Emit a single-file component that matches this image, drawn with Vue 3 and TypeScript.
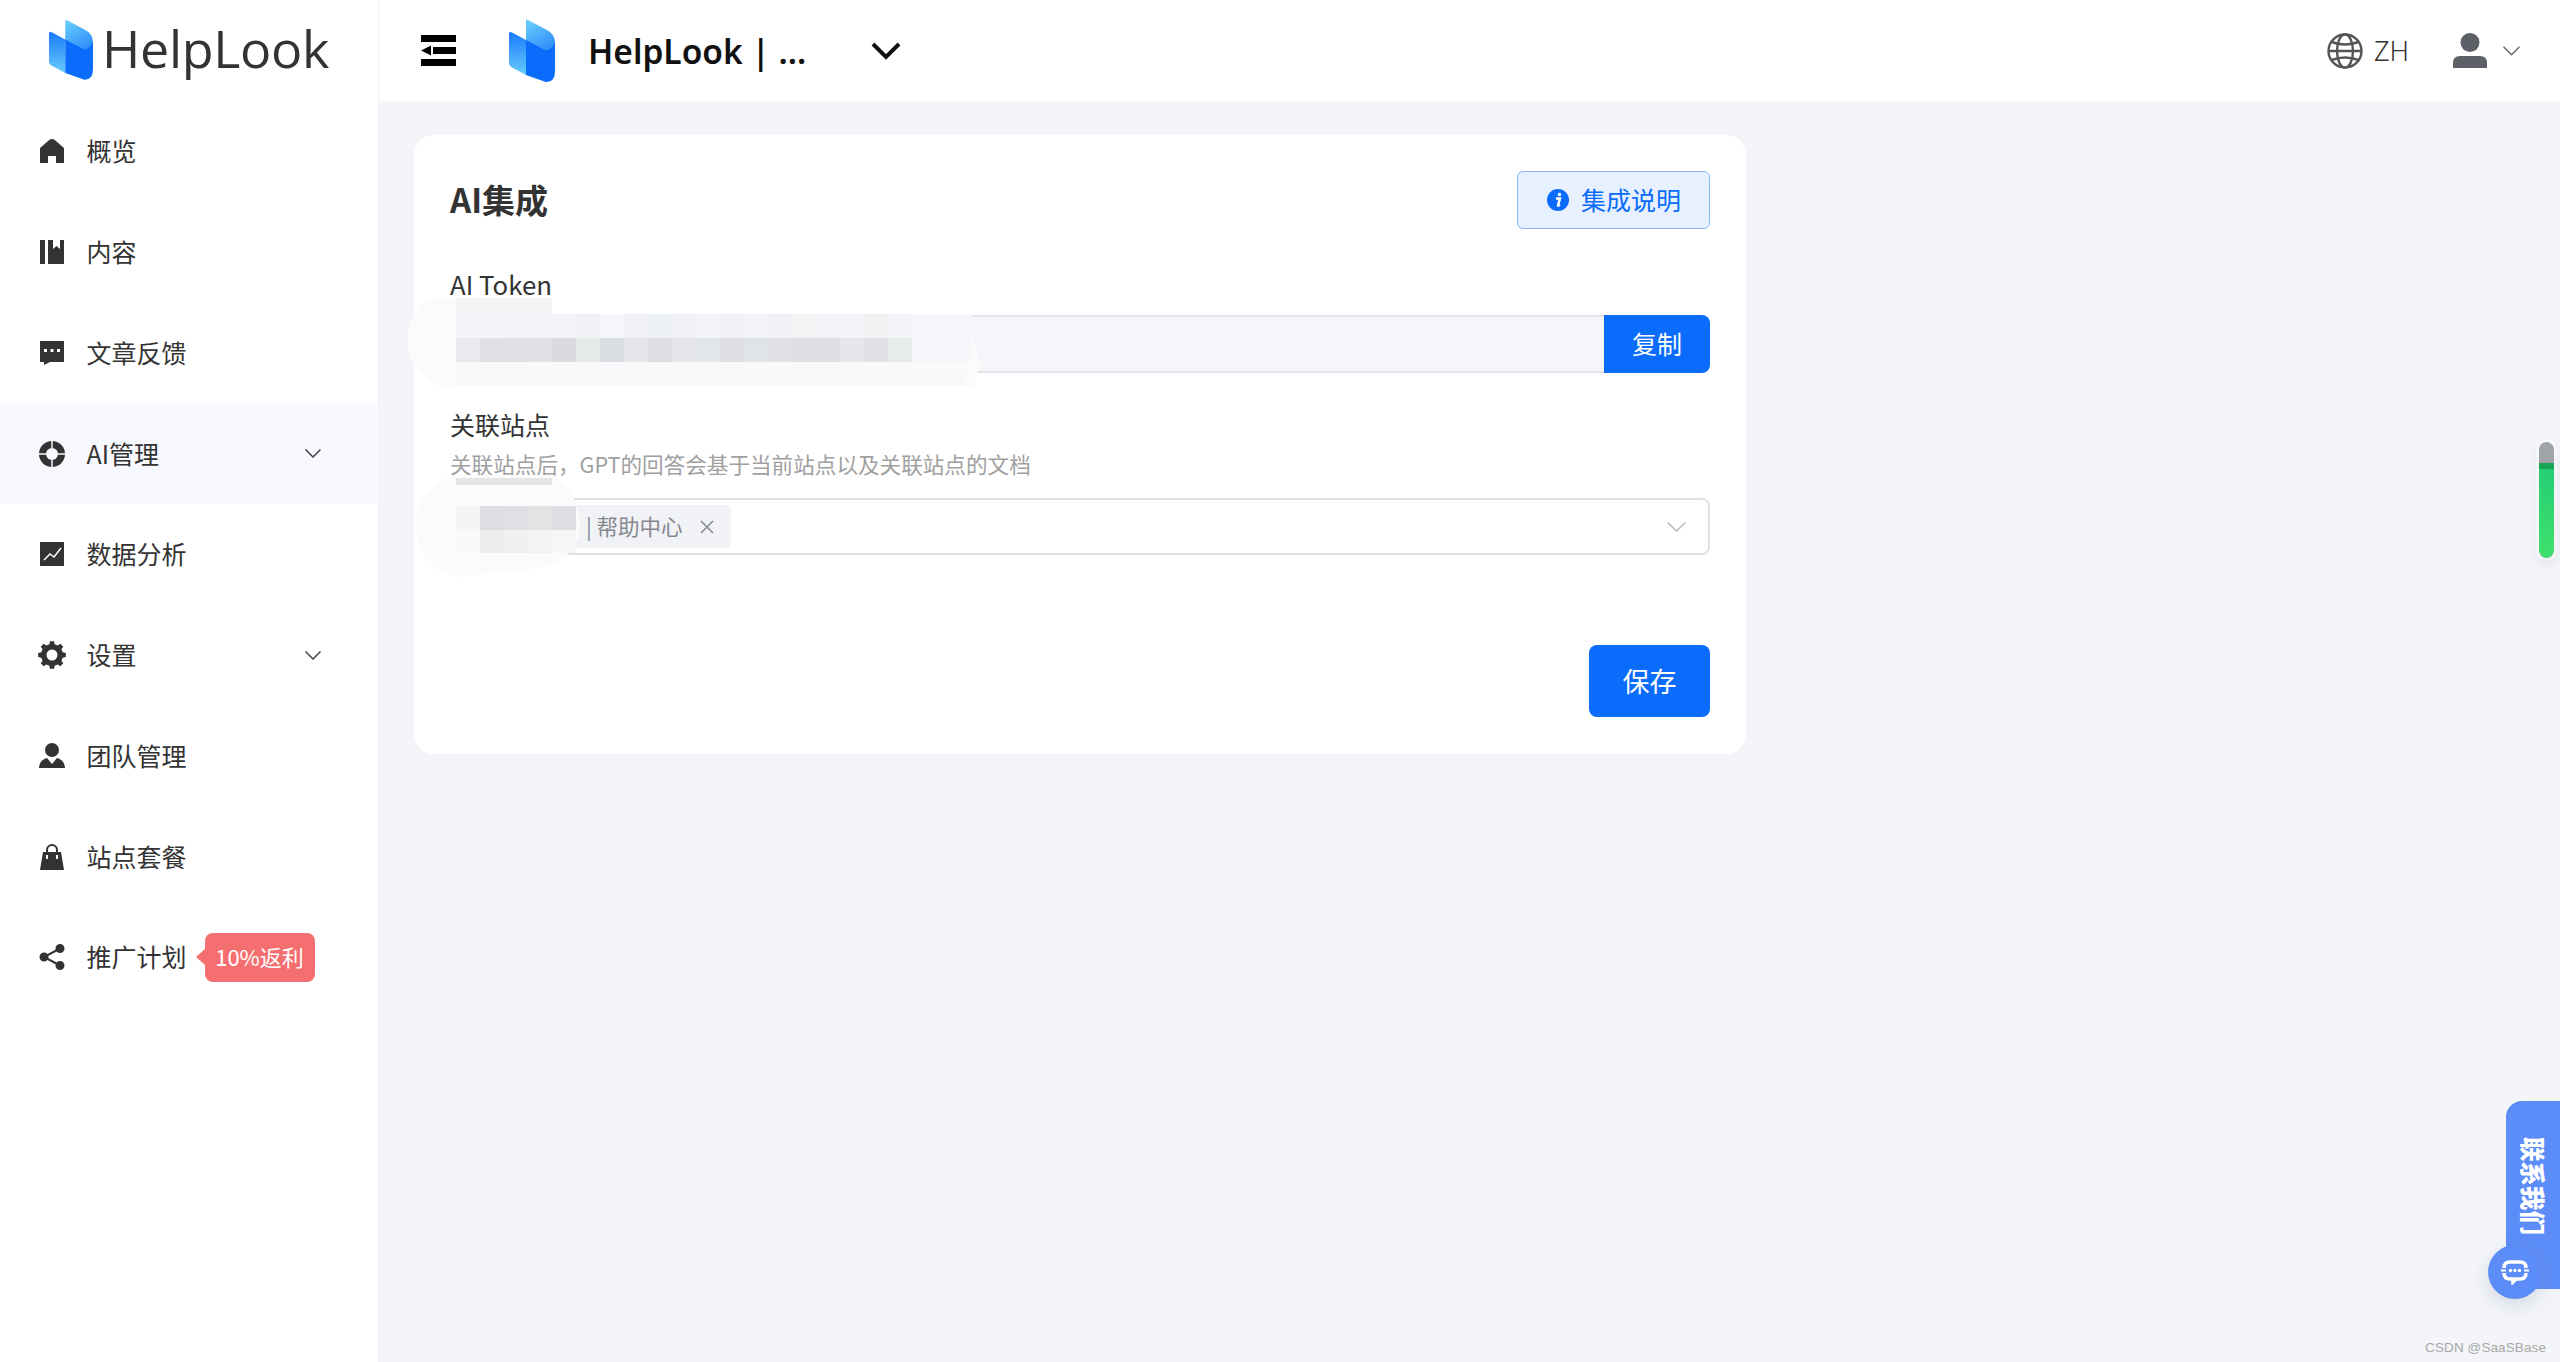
<script setup lang="ts">
interface MenuItem {
  label: string
  fill: string
  cut?: string
  line?: string
  cutLine?: string
  arrow?: boolean
  active?: boolean
  badge?: string
}

function gearPath(): string {
  const c = 14
  const teeth = 8
  const pts: string[] = []
  for (let i = 0; i < teeth; i++) {
    const a = (i / teeth) * Math.PI * 2 - Math.PI / 2
    const step = Math.PI / teeth
    const seq: [number, number][] = [
      [11, a - step * 0.62],
      [14, a - step * 0.38],
      [14, a + step * 0.38],
      [11, a + step * 0.62],
    ]
    for (const [r, t] of seq) {
      pts.push(`${(c + r * Math.cos(t)).toFixed(2)} ${(c + r * Math.sin(t)).toFixed(2)}`)
    }
  }
  return 'M' + pts.join('L') + 'Z'
}

const menu: MenuItem[] = [
  { label: '概览', fill: 'M14 2c1 0 2 .5 3 1.200L26 11v15h-8v-7h-8v7H2V11l9-7.800C12 2.500 13 2 14 2Z' },
  { label: '内容', fill: 'M2 2h5v24H2ZM10 2h5v9l3.500-3 3.500 3V2h4v24H10Z' },
  { label: '文章反馈', fill: 'M2 2h24v21H12l-6 3v-3H2Z', cut: 'M6 10h3v3H6ZM12.500 10h3v3h-3ZM19 10h3v3h-3Z' },
  {
    label: 'AI管理',
    active: true,
    arrow: true,
    fill: 'M14 1a13 13 0 1 0 0 26a13 13 0 1 0 0-26Z',
    cut: 'M8 14a6 6 0 1 0 12 0a6 6 0 1 0-12 0Z',
    cutLine: 'M14 0v8M14 20v8M0 14h8M20 14h8',
  },
  { label: '数据分析', fill: 'M2 2h24v24H2Z', cutLine: 'M6 20l6-6 4 3 7-9' },
  {
    label: '设置',
    arrow: true,
    fill: gearPath(),
    cut: 'M14 8.500a5.500 5.500 0 1 0 0 11a5.500 5.500 0 1 0 0-11Z',
  },
  { label: '团队管理', fill: 'M14 1a7 7 0 1 0 0 14a7 7 0 1 0 0-14ZM9 16l5 6 5-6c4 1 7 3 8 9.500 0 .5 0 .5-.5.5H1.500c-.5 0-.5 0-.5-.5C2 19 5 17 9 16Z' },
  {
    label: '站点套餐',
    fill: 'M5 9h18l3 18H2Z',
    line: 'M9 9V7a5 5 0 0 1 10 0v2',
    cut: 'M8 12h2v4H8ZM18 12h2v4h-2Z',
  },
  {
    label: '推广计划',
    badge: '10%返利',
    fill: 'M22 1a4.500 4.500 0 1 0 0 9a4.500 4.500 0 1 0 0-9ZM6 9.500a4.500 4.500 0 1 0 0 9a4.500 4.500 0 1 0 0-9ZM22 18a4.500 4.500 0 1 0 0 9a4.500 4.500 0 1 0 0-9Z',
    line: 'M22 5.500 6 14l16 8.500',
  },
]

const tokenMid = ['#e9eaed', '#dfe0e4', '#dfe0e4', '#e1e2e6', '#d9dbdf', '#e6e9ea', '#d9dce0', '#e3e5e8', '#dcdee2', '#e3e5e8', '#e2e6e8', '#dddfe3', '#e1e4e6', '#e1e2e6', '#dedfe3', '#dedfe3', '#e5e6e9', '#dfe1e5', '#e7ebec']
const tokenUpper = ['#f3f5f8', '#f3f5f8', '#f2f3f6', '#f2f3f6', '#f1f3f6', '#eff1f4', '#f5f6f9', '#f0f2f5', '#edf1f3', '#f0f2f5', '#f4f5f8', '#f1f2f5', '#f2f3f6', '#eff1f4', '#f1f3f5', '#f1f3f6', '#f3f4f7', '#eff1f3', '#f4f5f8']
const siteMid = ['#f4f5f6', '#dcdee1', '#dee0e3', '#e1e3e5', '#dddfe2']
const siteLow = ['#f8f9f9', '#eceded', '#eff0f1', '#f2f3f3', '#f6f6f7']
</script>

<template>
  <div class="page">
    <aside class="side">
      <div class="brand">
        <svg class="brand-logo" viewBox="0 0 46 63">
          <defs>
            <linearGradient id="lgTop" x1="0.2" y1="0" x2="0.7" y2="1">
              <stop offset="0" stop-color="#66ccfb" />
              <stop offset="1" stop-color="#2a87fb" />
            </linearGradient>
            <linearGradient id="lgLeft" x1="0.5" y1="1" x2="0.5" y2="0">
              <stop offset="0" stop-color="#66cbfb" />
              <stop offset="1" stop-color="#1b7afc" />
            </linearGradient>
          </defs>
          <path d="M17 1.500q0-1.500 2-.5L38 11q8 4 8 13v4l-6 8-23-12Z" fill="url(#lgTop)" />
          <path d="M0 15q0-3 3-1.500L17 21v35L4 49q-4-2-4-5Z" fill="url(#lgLeft)" />
          <path d="M17 21l19 10q6 1 10-7v28q0 11-8 11-2 0-4-1L17 56Z" fill="#0a6cfb" />
        </svg>
        <span class="brand-name">HelpLook</span>
      </div>
      <nav class="menu">
        <div v-for="item in menu" :key="item.label" class="menu-row" :class="{ active: item.active }">
          <svg class="menu-icon" viewBox="0 0 28 28">
            <path :d="item.fill" class="ic-fill" />
            <path v-if="item.line" :d="item.line" class="ic-line" />
            <path v-if="item.cut" :d="item.cut" class="ic-cut" />
            <path v-if="item.cutLine" :d="item.cutLine" class="ic-cutline" />
          </svg>
          <span class="menu-label">{{ item.label }}</span>
          <span v-if="item.badge" class="badge">{{ item.badge }}</span>
          <svg v-if="item.arrow" class="menu-arrow" viewBox="0 0 16 9">
            <path d="M.5.500 8 8 15.500.500" />
          </svg>
        </div>
      </nav>
    </aside>

    <div class="main">
      <header class="top">
        <svg class="fold" viewBox="0 0 35 31">
          <path d="M0 0h35v7H0ZM0 24h35v7H0ZM12 12h23v7H12ZM0 15.500 10 10.500v10Z" />
        </svg>
        <svg class="top-logo" viewBox="0 0 46 63">
          <path d="M17 1.500q0-1.500 2-.5L38 11q8 4 8 13v4l-6 8-23-12Z" fill="url(#lgTop)" />
          <path d="M0 15q0-3 3-1.500L17 21v35L4 49q-4-2-4-5Z" fill="url(#lgLeft)" />
          <path d="M17 21l19 10q6 1 10-7v28q0 11-8 11-2 0-4-1L17 56Z" fill="#0a6cfb" />
        </svg>
        <span class="site-name">HelpLook | ...</span>
        <svg class="site-arrow" viewBox="0 0 30 18">
          <path d="M2 2l13 13L28 2" />
        </svg>
        <div class="top-right">
          <svg class="globe" viewBox="0 0 36 36">
            <circle cx="18" cy="18" r="16.500" />
            <ellipse cx="18" cy="18" rx="8" ry="16.500" />
            <path d="M1.500 18h33M4.500 9q13.500 5 27 0M4.500 27q13.500-5 27 0" />
          </svg>
          <span class="lang">ZH</span>
          <svg class="user" viewBox="0 0 34 35">
            <circle cx="17" cy="9.500" r="9.500" />
            <path d="M0 35v-5q0-7 7-7h20q7 0 7 7v5Z" />
          </svg>
          <svg class="user-arrow" viewBox="0 0 18 10">
            <path d="M.5.500 9 9l8.500-8.500" />
          </svg>
        </div>
      </header>

      <section class="content">
        <div class="card">
          <div class="card-head">
            <h1 class="title">AI集成</h1>
            <button class="help">
              <svg class="info" viewBox="0 0 22 22">
                <circle cx="11" cy="11" r="11" />
                <circle cx="12.500" cy="5.500" r="1.700" class="info-w" />
                <path d="M9 9.500h4l-2 7q0 .5 2-.7" class="info-s" />
              </svg>
              <span class="help-text">集成说明</span>
            </button>
          </div>

          <label class="field-label token-label">AI Token</label>
          <div class="token">
            <div class="token-box"></div>
            <button class="copy">复制</button>
          </div>

          <label class="field-label site-label">关联站点</label>
          <p class="hint">关联站点后，GPT的回答会基于当前站点以及关联站点的文档</p>
          <div class="select">
            <span class="tag">
              <span class="tag-text">| 帮助中心</span>
              <svg class="tag-x" viewBox="0 0 14 14"><path d="M1 1l12 12M13 1 1 13" /></svg>
            </span>
            <svg class="select-arrow" viewBox="0 0 19 10"><path d="M.5.500 9.500 9l9-8.500" /></svg>
          </div>

          <div class="actions">
            <button class="save">保存</button>
          </div>

          <svg class="mosaic mosaic-token" viewBox="0 0 572 88">
            <path d="M22 0H144V16H500Q540 18 565 40L572 64 566 88H28Q0 70 0 44 0 12 22 0Z" fill="#fbfbfc" opacity=".92" />
            <rect x="48" y="0" width="96" height="16" fill="#f4f4f4" />
            <rect x="48" y="16" width="456" height="24" fill="#f3f4f7" />
            <rect x="504" y="16" width="60" height="48" fill="#f5f6fa" />
            <rect x="48" y="64" width="508" height="24" fill="#f8f9fb" />
            <rect v-for="(c, i) in tokenUpper" :key="'u' + i" :x="48 + i * 24" y="16" width="24" height="24" :fill="c" />
            <rect v-for="(c, i) in tokenMid" :key="'m' + i" :x="48 + i * 24" y="40" width="24" height="24" :fill="c" />
          </svg>
          <svg class="mosaic mosaic-site" viewBox="0 0 164 102">
            <path d="M40 0H136Q164 20 164 50 164 80 130 92L40 102Q0 90 0 50 0 12 40 0Z" fill="#fbfbfb" />
            <rect x="40" y="3" width="96" height="7" fill="#e5e5e5" />
            <rect v-for="(c, i) in siteMid" :key="'sm' + i" :x="40 + i * 24" y="31" width="24" height="24" :fill="c" />
            <rect v-for="(c, i) in siteLow" :key="'sl' + i" :x="40 + i * 24" y="55" width="24" height="23" :fill="c" />
          </svg>
        </div>
      </section>
    </div>

    <div class="pill">
      <div class="pill-fill"></div>
    </div>

    <div class="contact">
      <span class="contact-text">联系我们</span>
    </div>
    <div class="chat">
      <svg viewBox="0 0 28 26">
        <path d="M9 3h10q6 0 6 6v5q0 6-6 6h-4l-3 3v-3H9q-6 0-6-6V9q0-6 6-6Z" class="chat-bubble" />
        <path d="M0 11.500h6M22 11.500h6" class="chat-gap" />
        <path d="M0 11.500h5M23 11.500h5" class="chat-bar" />
        <circle cx="9.500" cy="11.500" r="1.700" /><circle cx="14" cy="11.500" r="1.700" /><circle cx="18.500" cy="11.500" r="1.700" />
      </svg>
    </div>
    <div class="mark">CSDN @SaaSBase</div>
  </div>
</template>

<style scoped>
.page {
  position: relative;
  display: flex;
  width: 2560px;
  height: 1362px;
  overflow: hidden;
  background: #f3f5f9;
  font-family: "Noto Sans CJK SC", "Noto Sans", sans-serif;
  color: #333;
}

.side {
  width: 378px;
  flex: none;
  background: #fff;
  border-right: 1px solid #f0f1f4;
}
.brand {
  display: flex;
  align-items: center;
  height: 101px;
  padding: 0 0 5px 49px;
  box-sizing: border-box;
}
.brand-logo {
  width: 44px;
  height: 61px;
  flex: none;
  margin-top: 2px;
}
.brand-name {
  margin-left: 9px;
  font-family: "Open Sans", sans-serif;
  font-size: 52px;
  font-weight: 500;
  line-height: 60px;
  letter-spacing: -.3px;
  color: #333;
}
.menu-row {
  display: flex;
  align-items: center;
  height: 100.750px;
  padding-left: 38px;
}
.menu-row.active {
  background: #f7f9fe;
}
.menu-icon {
  width: 28px;
  height: 28px;
  flex: none;
}
.ic-fill {
  fill: #333;
}
.ic-line {
  fill: none;
  stroke: #333;
  stroke-width: 2;
}
.ic-cut {
  fill: #fff;
}
.ic-cutline {
  fill: none;
  stroke: #fff;
  stroke-width: 1.500;
}
.menu-row.active .ic-cut {
  fill: #f7f9fe;
}
.menu-row.active .ic-cutline {
  stroke: #f7f9fe;
}
.menu-label {
  margin-left: 20.500px;
  padding-bottom: 2px;
  font-size: 25px;
  line-height: 36px;
}
.menu-arrow {
  width: 16px;
  height: 9px;
  margin-left: auto;
  margin-right: 57px;
}
.menu-arrow path {
  fill: none;
  stroke: #444;
  stroke-width: 1.500;
}
.badge {
  position: relative;
  margin-left: 18px;
  width: 110px;
  height: 49px;
  box-sizing: border-box;
  border-radius: 8px;
  background: #f56f70;
  color: #fff;
  font-size: 22px;
  line-height: 47px;
  text-align: center;
}
.badge::before {
  content: "";
  position: absolute;
  left: -9px;
  top: 16px;
  border-style: solid;
  border-width: 8px 9px 8px 0;
  border-color: transparent #f56f70 transparent transparent;
}

.main {
  flex: 1;
  min-width: 0;
  display: flex;
  flex-direction: column;
}
.top {
  display: flex;
  align-items: center;
  height: 101px;
  flex: none;
  background: #fff;
  padding: 0 40px 0 42px;
  box-sizing: border-box;
}
.fold {
  width: 35px;
  height: 31px;
  flex: none;
}
.top-logo {
  width: 46px;
  height: 63px;
  margin-left: 53px;
  flex: none;
}
.site-name {
  margin-left: 33px;
  width: 283px;
  font-family: "Noto Sans", sans-serif;
  font-size: 33.500px;
  font-weight: 600;
  color: #111;
  white-space: nowrap;
}
.site-arrow {
  width: 30px;
  height: 18px;
  fill: none;
  stroke: #111;
  stroke-width: 4;
  flex: none;
}
.top-right {
  display: flex;
  align-items: center;
  margin-left: auto;
}
.globe {
  width: 36px;
  height: 36px;
  fill: none;
  stroke: #555;
  stroke-width: 2.400;
}
.lang {
  margin-left: 11px;
  font-family: "Noto Sans", sans-serif;
  font-size: 27px;
  font-weight: 300;
  color: #333;
}
.user {
  width: 34px;
  height: 35px;
  margin-left: 44px;
  fill: #5e6068;
}
.user-arrow {
  width: 17px;
  height: 10px;
  margin-left: 16px;
  fill: none;
  stroke: #666;
  stroke-width: 1.500;
}

.content {
  flex: 1;
  padding: 34px 0 0 35px;
}
.card {
  position: relative;
  width: 1332px;
  height: 619px;
  box-sizing: border-box;
  padding: 36px;
  background: #fff;
  border-radius: 20px;
}
.card-head {
  display: flex;
  align-items: center;
  justify-content: space-between;
  height: 58px;
}
.title {
  margin: 0 0 2px;
  font-size: 33px;
  font-weight: 700;
  line-height: 44px;
  color: #333;
}
.help {
  display: flex;
  align-items: center;
  gap: 12px;
  width: 193px;
  height: 58px;
  box-sizing: border-box;
  padding: 0 0 0 29px;
  border: 1.500px solid #8ab6fb;
  border-radius: 6px;
  background: #e6f0ff;
  color: #0a6cfb;
  font-family: inherit;
  font-size: 25px;
}
.help-text {
  padding-bottom: 2px;
}
.info {
  width: 22px;
  height: 22px;
  fill: #0a6cfb;
}
.info-w {
  fill: #fff;
}
.info-s {
  fill: none;
  stroke: #fff;
  stroke-width: 2.500;
}
.field-label {
  display: block;
  font-size: 25px;
  line-height: 36px;
  color: #333;
}
.token-label {
  margin-top: 37px;
  font-size: 25.800px;
}
.token {
  display: flex;
  height: 58px;
  margin-top: 13px;
}
.token-box {
  flex: 1;
  box-sizing: border-box;
  background: #f5f6fa;
  border-top: 2px solid #e3e4ea;
  border-bottom: 2px solid #e3e4ea;
  border-left: 2px solid #e3e4ea;
  border-radius: 6px 0 0 6px;
}
.copy {
  width: 106px;
  padding: 0 0 3px;
  border: 0;
  border-radius: 0 8px 8px 0;
  background: #0a6cfb;
  color: #fff;
  font-family: inherit;
  font-size: 25px;
}
.site-label {
  margin-top: 33px;
  margin-bottom: 1px;
}
.hint {
  margin: 6px 0 0;
  font-size: 21.600px;
  line-height: 32px;
  color: #a0a0a0;
}
.select {
  display: flex;
  align-items: center;
  height: 57px;
  margin-top: 18px;
  box-sizing: border-box;
  padding-left: 6px;
  padding-right: 22px;
  border: 2px solid #e0e1e8;
  border-radius: 8px;
  justify-content: space-between;
}
.tag {
  display: flex;
  align-items: center;
  width: 273px;
  height: 43px;
  box-sizing: border-box;
  padding-left: 128px;
  background: #f0f2f6;
  border-radius: 6px;
}
.tag-text {
  padding-bottom: 2px;
  font-size: 21.500px;
  color: #85888f;
  white-space: nowrap;
}
.tag-x {
  width: 14px;
  height: 14px;
  margin-left: 17px;
  fill: none;
  stroke: #85888f;
  stroke-width: 1.500;
}
.select-arrow {
  width: 19px;
  height: 10px;
  fill: none;
  stroke: #b8bac0;
  stroke-width: 1.500;
}
.actions {
  display: flex;
  justify-content: flex-end;
  margin-top: 90px;
}
.save {
  width: 121px;
  height: 72px;
  padding: 0 0 2px;
  border: 0;
  border-radius: 8px;
  background: #0a6cfb;
  color: #fff;
  font-family: inherit;
  font-size: 27px;
}
.mosaic {
  position: absolute;
}
.mosaic-token {
  left: -6px;
  top: 163px;
  width: 572px;
  height: 88px;
}
.mosaic-site {
  left: 2px;
  top: 340px;
  width: 164px;
  height: 102px;
}

.pill {
  position: absolute;
  left: 2539px;
  top: 442px;
  width: 15px;
  height: 116px;
  border-radius: 8px;
  background: #a0a3a8;
  overflow: hidden;
  box-shadow: 0 0 0 3px rgba(255, 255, 255, .5), 0 6px 12px rgba(150, 155, 170, .25);
}
.pill-fill {
  margin-top: 21px;
  height: 95px;
  border-top: 6px solid #18a558;
  box-sizing: border-box;
  background: linear-gradient(#26cf75, #3fe06c);
  border-radius: 0 0 8px 8px;
}
.contact {
  position: absolute;
  left: 2506px;
  top: 1101px;
  width: 54px;
  height: 188px;
  background: #5b8cf8;
  border-radius: 16px 0 0 16px;
  display: flex;
  justify-content: center;
  padding-top: 36px;
  box-sizing: border-box;
}
.contact-text {
  writing-mode: vertical-rl;
  text-orientation: sideways;
  color: #fff;
  font-size: 24.500px;
  font-weight: 900;
  line-height: 30px;
}
.chat {
  position: absolute;
  left: 2488px;
  top: 1245px;
  width: 54px;
  height: 54px;
  border-radius: 50%;
  background: #5b8cf8;
  box-shadow: 0 6px 18px rgba(120, 130, 160, .25);
  display: flex;
  align-items: center;
  justify-content: center;
}
.chat svg {
  width: 28px;
  height: 26px;
  fill: #fff;
}
.chat-bubble {
  fill: none;
  stroke: #fff;
  stroke-width: 3.500;
}
.chat-gap {
  stroke: #5b8cf8;
  stroke-width: 5;
}
.chat-bar {
  stroke: #fff;
  stroke-width: 2;
}
.mark {
  position: absolute;
  right: 14px;
  top: 1340px;
  font-family: "Liberation Sans", sans-serif;
  font-size: 13.500px;
  line-height: 16px;
  letter-spacing: .1px;
  color: #a8a8a8;
}
</style>

<style>
html, body {
  margin: 0;
  background: #f3f5f9;
}
</style>
